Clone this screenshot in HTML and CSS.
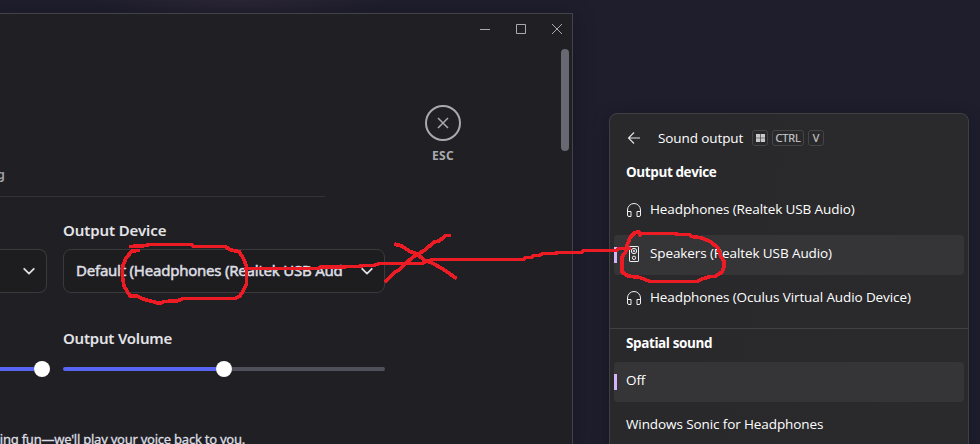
FILE: index.html
```
<!DOCTYPE html>
<html lang="en">
<head>
<meta charset="utf-8">
<title>Sound settings</title>
<link rel="stylesheet" href="styles.css">
</head>
<body>
<div class="desktop">
  <section class="window">
    <header class="titlebar">
      <svg width="12" height="12" viewBox="0 0 12 12"><path d="M1 6.500h10"/></svg>
      <svg width="12" height="12" viewBox="0 0 12 12"><path d="M1.500 1.500h9v9h-9z"/></svg>
      <svg width="12" height="12" viewBox="0 0 12 12"><path d="M1 1l10 10M11 1L1 11"/></svg>
    </header>
    <div class="window-body">
      <main class="settings">
        <div class="tabs"><span class="tab">Debugging</span></div>
        <div class="fields">
          <div class="field field-cut">
            <div class="label">&nbsp;</div>
            <div class="select select-cut">
              <svg class="chevron" width="14" height="14" viewBox="0 0 14 14"><path d="M2.200 4.800L7 9.600l4.800-4.800"/></svg>
            </div>
          </div>
          <div class="field">
            <div class="label label-device">Output Device</div>
            <div class="select">
              <span class="value">Default (Headphones (Realtek USB Audio))</span>
              <svg class="chevron" width="14" height="14" viewBox="0 0 14 14"><path d="M2.200 4.800L7 9.600l4.800-4.800"/></svg>
            </div>
          </div>
        </div>
        <div class="fields volumes">
          <div class="field field-cut">
            <div class="label">&nbsp;</div>
            <div class="slider slider-input"><i class="fill"></i><i class="knob"></i></div>
          </div>
          <div class="field">
            <div class="label label-volume">Output Volume</div>
            <div class="slider"><i class="fill"></i><i class="knob"></i><i class="rest"></i></div>
          </div>
        </div>
        <div class="hint"><span>Say something fun—we'll play your voice back to you.</span></div>
      </main>
      <aside class="escape">
        <svg width="36" height="36" viewBox="0 0 36 36"><circle cx="18" cy="18" r="17"/><path d="M13 13l10 10M23 13L13 23"/></svg>
        <span>ESC</span>
      </aside>
      <div class="scrollbar"></div>
    </div>
  </section>

  <section class="flyout">
    <header class="flyout-head">
      <svg class="back" width="14" height="14" viewBox="0 0 14 14"><path d="M13 7H1.500M7 1.500L1.500 7 7 12.500"/></svg>
      <span class="flyout-title">Sound output</span>
      <span class="key key-win"><svg width="9" height="8" viewBox="0 0 9 8"><path d="M0 0h4.200v3.700H0zM4.800 0H9v3.700H4.800zM0 4.300h4.200V8H0zM4.800 4.300H9V8H4.800z"/></svg></span>
      <span class="key key-ctrl">CTRL</span>
      <span class="key key-v">V</span>
    </header>
    <h2>Output device</h2>
    <ul>
      <li><svg class="icon" width="16" height="16" viewBox="0 0 16 16"><path d="M1.500 13V8a6.500 6.500 0 0 1 13 0v5M1.500 9.500H5v5H3a1.500 1.500 0 0 1-1.500-1.500zM14.500 9.500H11v5h2a1.500 1.500 0 0 0 1.500-1.500z"/></svg><span>Headphones (Realtek USB Audio)</span></li>
      <li class="selected"><svg class="icon" width="16" height="16" viewBox="0 0 16 16"><rect x="3.500" y=".5" width="9" height="15" rx=".6"/><circle cx="8" cy="5" r="2.700"/><circle cx="8" cy="5" r=".8"/><circle cx="8" cy="11.800" r="1.700"/></svg><span>Speakers (Realtek USB Audio)</span></li>
      <li><svg class="icon" width="16" height="16" viewBox="0 0 16 16"><path d="M1.500 13V8a6.500 6.500 0 0 1 13 0v5M1.500 9.500H5v5H3a1.500 1.500 0 0 1-1.500-1.500zM14.500 9.500H11v5h2a1.500 1.500 0 0 0 1.500-1.500z"/></svg><span>Headphones (Oculus Virtual Audio Device)</span></li>
    </ul>
    <div class="rule"></div>
    <h2 class="spatial">Spatial sound</h2>
    <ul>
      <li class="selected off"><span>Off</span></li>
      <li><span>Windows Sonic for Headphones</span></li>
    </ul>
  </section>

  <svg class="ink" width="980" height="444" viewBox="0 0 980 444">
    <path d="M131 246.500L146 245.500L149 244.500H191L194 246.500H225L231 250L239 251.500L243 258L246.500 266V284L243 291L240 296L235 298.500H183L177 301L164 301.500L160 303.500L154 302L143 299L137 296L130 296L124 286L122.500 277V267L126 258L132 251L138 250.500"/>
    <path d="M246 268.500H318L321 267L358 266.500L364 265.500H374L379 263.500H422L426 261.500L433 259.500H523L526 257.500H531L534 255.500H539L543 253.500H555L558 252.500H581L584 250.500H616L619 248.500H629"/>
    <path d="M396 244.500L402 246L409 251L417 254L424 260L432 263L443 269L455 277.500"/>
    <path d="M449 235.500H446L439 241L434 242L425 250L413 257L405 264L399 270L395 272L386 281"/>
    <path d="M640 235L639 232L635 232.500L630.500 237L627.500 244L625.500 252L622 257V272L628 276L640 277.500L650 281.500H697L702 279L710 276.500H715L722 272L724 267V261L721 257L718 248L711 242L702 238L692 236.500L689 234.500H678L675 233.500H640"/>
  </svg>
</div>
</body>
</html>
```
FILE: styles.css
```
* { box-sizing: border-box; }
body { margin: 0; }
svg { display: block; flex: none; }

.desktop {
  position: relative;
  width: 980px;
  height: 444px;
  overflow: hidden;
  display: flex;
  align-items: flex-start;
  gap: 36px;
  background: radial-gradient(ellipse 150px 20px at 240px 0, #2b2636, transparent), #1f1e2d;
}

.window {
  width: 573px;
  height: 431px;
  margin-top: 13px;
  flex: none;
  overflow: hidden;
  background: #202024;
  border-top: 1px solid #434347;
  border-right: 1px solid #434347;
  box-shadow: 0 4px 20px rgba(10, 9, 20, .4);
  font-family: "Noto Sans", sans-serif;
}
.titlebar {
  height: 34px;
  padding: 9px 9px 0 0;
  display: flex;
  justify-content: flex-end;
  gap: 24px;
}
.titlebar svg { fill: none; stroke: #aaaaae; stroke-width: 1; }

.window-body { display: grid; grid-template-columns: 385px 116px 1fr; }
.settings { padding-top: 115px; min-width: 0; }
.tabs {
  width: 325px;
  height: 34px;
  border-bottom: 1px solid #323237;
}
.tab {
  display: flex;
  justify-content: flex-end;
  width: 5px;
  height: 22px;
  line-height: 22px;
  font-size: 13px;
  font-weight: 600;
  color: #a4a4a9;
}
.fields { display: grid; grid-template-columns: 47px 322px; gap: 16px; margin-top: 23px; }
.label {
  height: 20px;
  line-height: 20px;
  font-size: 15px;
  font-weight: 600;
  letter-spacing: -.1px;
  color: #e4e4e8;
  white-space: nowrap;
}
.label-volume { letter-spacing: -.22px; }
.select {
  height: 44px;
  margin-top: 9px;
  padding: 0 10px 0 12px;
  display: flex;
  align-items: center;
  justify-content: space-between;
  background: #1d1d20;
  border: 1px solid #39393e;
  border-radius: 8px;
}
.select-cut { border-left: 0; border-radius: 0 8px 8px 0; justify-content: flex-end; }
.value {
  width: 267px;
  margin-top: -2px;
  overflow: hidden;
  white-space: nowrap;
  font-size: 15px;
  letter-spacing: -.23px;
  line-height: 22px;
  -webkit-text-stroke: .5px #dedee2;
  color: #dedee2;
}
.chevron { fill: none; stroke: #dedee2; stroke-width: 1.800; stroke-linecap: round; stroke-linejoin: round; }

.volumes { margin-top: 35px; }
.slider { height: 16px; margin-top: 13px; display: flex; align-items: center; }
.fill { flex: none; width: 153px; height: 4px; background: #5865f2; border-radius: 2px 0 0 2px; }
.slider-input .fill { width: 34px; border-radius: 0; }
.knob { width: 16px; height: 16px; border-radius: 50%; background: #fff; flex: none; }
.rest { flex: 1; height: 4px; background: #50505a; border-radius: 0 2px 2px 0; }
.hint {
  width: 245px;
  margin-top: 52px;
  display: flex;
  justify-content: flex-end;
  white-space: nowrap;
  font-size: 13px;
  letter-spacing: -.24px;
  line-height: 20px;
  -webkit-text-stroke: .3px #dedee2;
  color: #dedee2;
}

.escape { padding-top: 57px; display: flex; flex-direction: column; align-items: center; }
.escape svg { fill: none; stroke: #aaaaae; stroke-width: 2; }
.escape path { stroke-width: 1.500; }
.escape span { margin-top: 6px; font-size: 12px; font-weight: 700; line-height: 18px; letter-spacing: .3px; color: #aaaaae; }
.scrollbar { width: 8px; height: 102px; margin: 1px 3px 0 auto; border-radius: 4px; background: #686872; }

.flyout {
  width: 360px;
  height: 340px;
  margin-top: 113px;
  flex: none;
  padding-top: 13px;
  background: linear-gradient(100deg, #29292b, #2a2a2d);
  border: 1px solid #404043;
  border-radius: 8px;
  box-shadow: 0 4px 16px rgba(10, 9, 20, .4);
  font-family: "Open Sans", "Noto Sans", sans-serif;
  font-size: 13.500px;
  letter-spacing: -.1px;
  color: #fff;
  white-space: nowrap;
}
.flyout-head { height: 22px; padding-left: 17px; display: flex; align-items: center; }
.back { fill: none; stroke: #e4e4e6; stroke-width: 1.100; }
.flyout-title { width: 94px; margin-left: 17px; }
.key {
  height: 16px;
  margin-right: 4px;
  display: flex;
  align-items: center;
  justify-content: center;
  border: 1px solid #444447;
  border-radius: 3px;
  font-size: 11px;
  line-height: 13px;
  padding-bottom: 1px;
  letter-spacing: -.1px;
  -webkit-text-stroke: .2px #c9c9cb;
  color: #c9c9cb;
}
.key-win, .key-v { width: 16px; }
.key-ctrl { width: 32px; }
.key svg { fill: #c9c9cb; }
h2 { margin: 12px 0 8px 16px; font-size: 13.500px; font-weight: 700; letter-spacing: -.4px; line-height: 22px; }
ul { margin: 0 4px; padding: 0; list-style: none; display: flex; flex-direction: column; gap: 4px; }
li { height: 40px; padding: 0 0 4px 12px; display: flex; align-items: center; gap: 8px; border-radius: 4px; }
.icon { fill: none; stroke: #f0f0f1; stroke-width: 1; }
li .icon { margin-top: 2px; }
.selected { background: linear-gradient(90deg, #d2b3fc, #d2b3fc) 0 12px / 3px 16px no-repeat, #353537; }
.rule { height: 1px; margin-top: 9px; background: #414144; }
.spatial { margin-top: 3px; }

.ink { position: absolute; left: 0; top: 0; fill: none; stroke: #ed1c24; stroke-width: 3.700; stroke-linejoin: round; stroke-linecap: square; shape-rendering: crispEdges; }
```
